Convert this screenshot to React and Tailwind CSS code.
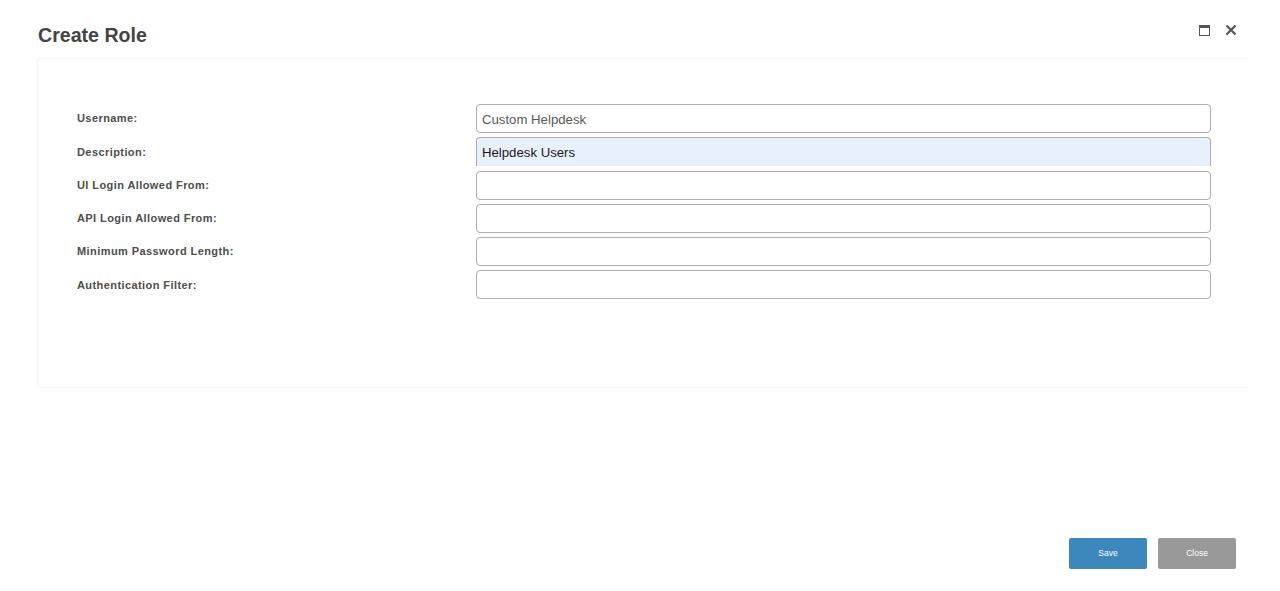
const rows = [
  { label: "Username:", value: "Custom Helpdesk" },
  { label: "Description:", value: "Helpdesk Users", autofill: true },
  { label: "UI Login Allowed From:", value: "" },
  { label: "API Login Allowed From:", value: "" },
  { label: "Minimum Password Length:", value: "" },
  { label: "Authentication Filter:", value: "" },
];

function Row({ label, value, autofill }) {
  return (
    <div className="flex items-center h-[29px]">
      <label className="w-[438px] shrink-0 pl-[39px] text-[11px] font-bold tracking-[0.42px] text-[#4d4d4d]">
        {label}
      </label>
      <div
        className={
          autofill
            ? "w-[735px] h-[29px] flex items-center px-[5px] pt-[2px] rounded-t-[4px] border border-b-0 border-[#adadad] bg-[#e8f0fe] text-[13.2px] text-[#1a1a1a]"
            : "w-[735px] h-[29px] flex items-center px-[5px] pt-[2px] rounded-[4px] border border-[#adadad] bg-white text-[13.2px] text-[#595959]"
        }
      >
        {value}
      </div>
    </div>
  );
}

export default function App() {
  return (
    <div className="h-[591px] w-[1280px] flex flex-col bg-white font-['Liberation_Sans',Arial,sans-serif] overflow-hidden">
      <header className="flex items-start justify-between pl-[38px] pr-[43px] pt-[23px] h-[58px]">
        <h1 className="text-[19.6px] leading-[24px] font-bold text-[#444444]">Create Role</h1>
        <div className="flex items-center gap-[15px] pt-[1px]">
          <svg width="11" height="11" viewBox="0 0 11 11" aria-label="Maximize">
            <rect x="0.5" y="0.5" width="10" height="10" fill="none" stroke="#555555" strokeWidth="1" />
            <rect x="0" y="0" width="11" height="3" fill="#555555" />
          </svg>
          <svg width="12" height="12" viewBox="0 0 12 12" aria-label="Close">
            <path d="M1.5 1.5 L10.5 10.5 M10.5 1.5 L1.5 10.5" stroke="#5c5c5c" strokeWidth="2.4" fill="none" />
          </svg>
        </div>
      </header>
      <main className="ml-[37px] w-[1211px] h-[330px] border border-r-0 border-[#f6f6f6] rounded-l-[3px] pt-[45px] flex flex-col gap-[4.25px]">
        {rows.map((r) => (
          <Row key={r.label} {...r} />
        ))}
      </main>
      <footer className="flex justify-end gap-[11px] pr-[44px] pt-[150px]">
        <button className="w-[78px] h-[31px] rounded-[2px] bg-[#3c87bb] text-white text-[8.5px]">Save</button>
        <button className="w-[78px] h-[31px] rounded-[2px] bg-[#999999] text-white text-[8.5px]">Close</button>
      </footer>
    </div>
  );
}
